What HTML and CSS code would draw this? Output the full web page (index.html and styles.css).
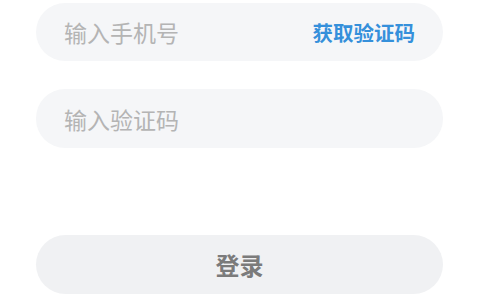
FILE: index.html
```html
<!DOCTYPE html>
<html lang="zh-CN">
<head>
  <meta charset="UTF-8">
  <title>登录</title>
  <meta name="viewport" content="width=device-width, initial-scale=1.0">
  <link rel="stylesheet" href="styles.css">
</head>
<body>
  <!-- phone + code login form -->
  <form class="login-form" onsubmit="return false">
    <div class="field">
      <input type="tel" placeholder="输入手机号">
      <button type="button" class="code-btn">获取验证码</button>
    </div>
    <div class="field">
      <input type="text" placeholder="输入验证码">
    </div>
    <button type="submit" class="login-btn">登录</button>
  </form>
</body>
</html>
```

FILE: styles.css
```css
* {
  box-sizing: border-box;
  font-family: "Noto Sans CJK SC", "Noto Sans", sans-serif;
}

body, html {
  margin: 0;
  padding: 0;
  background: #ffffff;
}

.login-form {
  display: flex;
  flex-direction: column;
  padding: 3px 37px 0 36px;
}

.field {
  display: flex;
  align-items: center;
  height: 58px;
  padding: 0 28px;
  border-radius: 29px;
  background: #f5f6f8;
  margin-bottom: 28px;
}

.field + .field {
  height: 59px;
}

.field input {
  flex: 1;
  min-width: 0;
  border: none;
  outline: none;
  background: transparent;
  font-size: 23px;
  color: #333;
  padding: 0;
}

.field input::placeholder {
  color: #b4b4b4;
}

.code-btn {
  border: none;
  background: transparent;
  padding: 0;
  font-size: 20.5px;
  font-weight: bold;
  color: #3590db;
  cursor: pointer;
}

.login-btn {
  margin-top: 59px;
  height: 59px;
  border: none;
  border-radius: 30px;
  background: #f0f1f3;
  color: #7b7b7b;
  font-size: 24px;
  font-weight: bold;
  cursor: pointer;
}
```
